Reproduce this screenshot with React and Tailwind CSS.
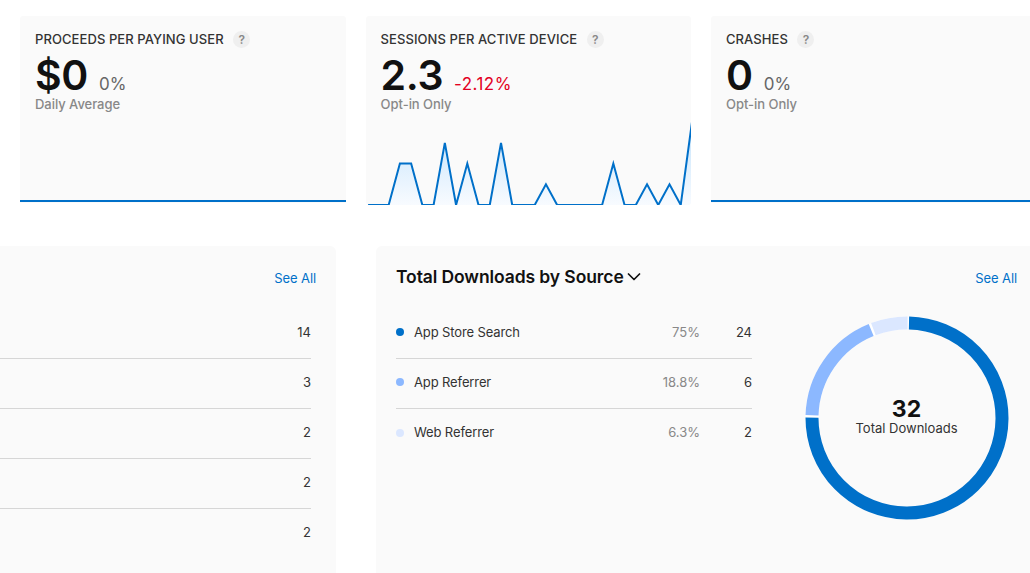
import React from 'react';

const metrics = [
  { title: 'PROCEEDS PER PAYING USER', value: '$0', change: '0%', note: 'Daily Average' },
  {
    title: 'SESSIONS PER ACTIVE DEVICE',
    value: '2.3',
    change: '-2.12%',
    negative: true,
    note: 'Opt-in Only',
    points: [0, 0, 0, 2, 2, 0, 0, 3, 0, 2, 0, 0, 3, 0, 0, 0, 1, 0, 0, 0, 0, 0, 2, 0, 0, 1, 0, 1, 0, 4],
  },
  { title: 'CRASHES', value: '0', change: '0%', note: 'Opt-in Only' },
];

const territoryCounts = [14, 3, 2, 2, 2];

const sources = [
  { name: 'App Store Search', percent: '75%', count: 24, dot: 'bg-[#0070c9]', color: '#0070c9' },
  { name: 'App Referrer', percent: '18.8%', count: 6, dot: 'bg-[#8cb8ff]', color: '#8cb8ff' },
  { name: 'Web Referrer', percent: '6.3%', count: 2, dot: 'bg-[#dbe7ff]', color: '#dbe7ff' },
];

const Sparkline = ({ points }) => {
  const coords = points.map((p, i) => `${(0.2 + i * 11.22).toFixed(2)},${(83 - p * 20.7).toFixed(2)}`);
  const line = `M${coords.join(' L')}`;

  return (
    <svg className="block w-full" height="83" viewBox="0 0 325 83" preserveAspectRatio="none">
      <defs>
        <linearGradient id="spark" gradientUnits="userSpaceOnUse" x1="0" y1="0" x2="0" y2="83">
          <stop offset="0" stopColor="#c2e2fb" />
          <stop offset="1" stopColor="#f8fbff" />
        </linearGradient>
      </defs>
      <path d={`${line} L325.6,83 L0.2,83 Z`} fill="url(#spark)" />
      <path d={line.replace('M0.20', 'M2')} fill="none" stroke="#0070c9" strokeWidth="2" />
    </svg>
  );
};

const MetricCard = ({ metric }) => (
  <div
    className={`flex flex-col rounded-[3px] bg-[#fafafa] overflow-hidden ${
      metric.points ? 'h-[189px]' : 'h-[187px] pb-px rounded-b-none'
    }`}
  >
    <div className="px-[15px] pt-3.5">
      <div className="flex items-center h-[19px]">
        <h3 className="text-[13px] font-medium tracking-[0.08px] text-[#333]">{metric.title}</h3>
        <span className="ml-[9.5px] flex items-center justify-center w-[17px] h-[17px] rounded-full bg-[#efefef] text-xs font-semibold text-[#888]">
          ?
        </span>
      </div>
      <div className="flex items-baseline h-[47px] pt-2">
        <span className="text-[41px]/9 font-semibold tracking-[-0.4px] text-[#111]">{metric.value}</span>
        <span
          className={`ml-[11px] text-[17px]/5 ${
            metric.negative ? 'tracking-[0.45px] text-[#e30022]' : 'tracking-[0.2px] text-[#666]'
          }`}
        >
          {metric.change}
        </span>
      </div>
      <p className="text-[13px] leading-[17px] font-medium tracking-[-0.04px] text-[#888]">{metric.note}</p>
    </div>
    <div className="mt-auto">
      {metric.points ? <Sparkline points={metric.points} /> : <div className="h-0.5 bg-[#0070c9]"></div>}
    </div>
  </div>
);

const Donut = () => {
  const total = sources.reduce((sum, s) => sum + s.count, 0);
  const r = 95;
  const length = 2 * Math.PI * r;
  const gap = 2.4;
  let start = 0;

  return (
    <div className="grid place-items-center w-[204px] h-[204px]">
      <svg className="col-start-1 row-start-1" width="204" height="204" viewBox="0 0 204 204">
        <circle cx="102" cy="102" r={r} fill="none" stroke="#fff" strokeWidth="13" />
        <g transform="rotate(0.5 102 102)">
          {sources.map((s) => {
            const size = (s.count / total) * length;
            const offset = -(start + gap / 2);
            start += size;
            return (
              <circle
                key={s.name}
                cx="102"
                cy="102"
                r={r}
                fill="none"
                stroke={s.color}
                strokeWidth="13"
                strokeDasharray={`${size - gap} ${length}`}
                strokeDashoffset={offset}
                transform="rotate(-90 102 102)"
              />
            );
          })}
        </g>
      </svg>
      <div className="col-start-1 row-start-1 flex flex-col items-center pr-px">
        <span className="text-[23px]/[22px] font-bold tracking-[0.2px] text-[#111]">32</span>
        <span className="text-[13px]/[16px] pb-0.5 text-[#333]">Total Downloads</span>
      </div>
    </div>
  );
};

const App = () => {
  return (
    <div className="w-[1030px] h-[573px] overflow-hidden bg-white pt-4 font-['Inter','Liberation_Sans',sans-serif]">
      <div className="grid grid-cols-[325.6px_325.4px_326px] gap-x-5 items-start pl-5 h-[230px]">
        {metrics.map((metric) => (
          <MetricCard key={metric.title} metric={metric} />
        ))}
      </div>

      <div className="flex gap-10 h-[327px]">
        <section className="w-[336px] rounded-tr-md bg-[#fafafa] pt-[22px]">
          <div className="flex justify-end pr-5">
            <a href="#" className="text-[13px]/5 tracking-[-0.1px] text-[#0070c9]">See All</a>
          </div>
          <ul className="mt-[21px] mr-[25px]">
            {territoryCounts.map((count, i) => (
              <li
                key={i}
                className="flex items-center justify-end h-[50px] pb-0.5 border-b border-[#d6d6d6] last:border-b-0 text-[13px] text-[#333]"
              >
                {count}
              </li>
            ))}
          </ul>
        </section>

        <section className="flex-1 rounded-tl-md bg-[#fafafa] pt-5 pl-5">
          <div className="flex items-center justify-between h-[22px] pr-[13px]">
            <h2 className="flex items-center text-[17.5px]/[22px] font-semibold tracking-[-0.1px] text-[#111]">
              Total Downloads by Source
              <svg className="ml-[3px]" width="14" height="8" viewBox="0 0 14 8" fill="none">
                <path d="M1.5 1L7 6.5L12.5 1" stroke="#111" strokeWidth="1.7" strokeLinecap="round" strokeLinejoin="round" />
              </svg>
            </h2>
            <a href="#" className="mt-0.5 text-[13px]/5 tracking-[-0.1px] text-[#0070c9]">See All</a>
          </div>
          <div className="flex items-start mt-[21px]">
            <ul className="w-[356px]">
              {sources.map((source) => (
                <li
                  key={source.name}
                  className="flex items-center h-[50px] pb-0.5 border-b border-[#d6d6d6] last:border-b-0 text-[13px] text-[#333]"
                >
                  <span className={`w-2 h-2 mr-2.5 mb-px rounded-full ${source.dot}`}></span>
                  <span className="flex-1 tracking-[-0.12px]">{source.name}</span>
                  <span className="text-[#888]">{source.percent}</span>
                  <span className="w-[52px] text-right">{source.count}</span>
                </li>
              ))}
            </ul>
            <div className="ml-[53px] mt-[7px]">
              <Donut />
            </div>
          </div>
        </section>
      </div>
    </div>
  );
};

export default App;
